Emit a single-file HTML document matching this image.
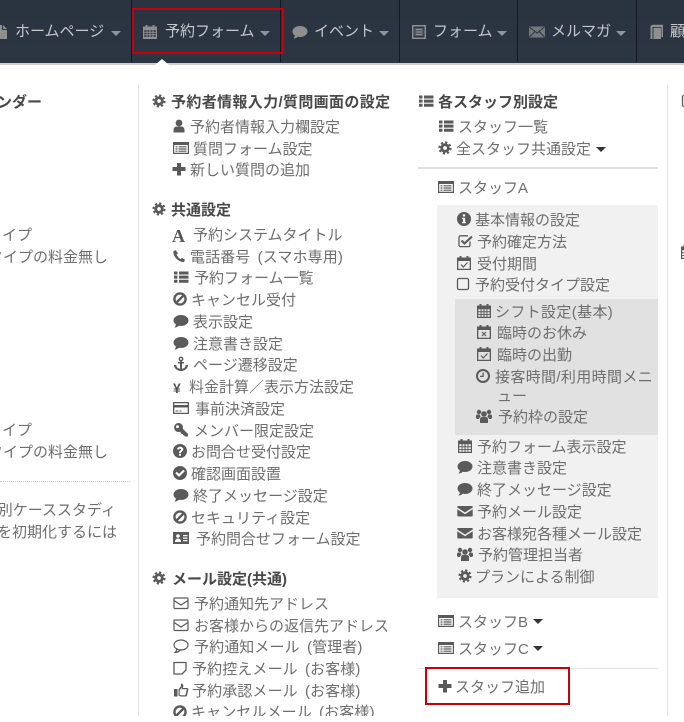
<!DOCTYPE html>
<html lang="ja"><head><meta charset="utf-8"><title>予約フォーム</title>
<style>
html,body{margin:0;padding:0;background:#fff}
#p{position:relative;width:684px;height:722px;overflow:hidden;background:#fff;font-family:"Liberation Sans","Noto Sans CJK JP",sans-serif;color:#6e6e6e;font-size:15px}
.l,.h,.n{position:absolute;white-space:nowrap;line-height:22px;height:22px;margin-top:2px}
.h{font-weight:bold;color:#484848}
.n{color:#c4c8cc;line-height:24px;height:24px;margin-top:1px}
.sp{word-spacing:3px;letter-spacing:.1px}
.ls{letter-spacing:.35px}
svg.i{position:absolute;width:16px;height:16px;color:#5a5a5a;fill:currentColor}
svg.w{color:#8f8f8f}
.b{position:absolute}
.c{position:absolute;width:0;height:0;border-left:5px solid transparent;border-right:5px solid transparent;border-top:5px solid #333}
.cn{border-top-color:#8e9499}
</style></head><body><div id="p">
<svg width="0" height="0" style="position:absolute"><defs>
<symbol id="cog" viewBox="-1.500 -1.500 19 19"><circle cx="8" cy="8" r="3.900" fill="none" stroke="currentColor" stroke-width="3.400"/><circle cx="8" cy="8" r="6.600" fill="none" stroke="currentColor" stroke-width="2.400" stroke-dasharray="2.600 2.580"/></symbol>
<symbol id="user" viewBox="0 0 16 16"><circle cx="8" cy="5" r="3.400"/><path d="M2.500 14.500V12c0-2.300 1.600-3.500 3-3.500h5c1.400 0 3 1.200 3 3.500v2.500z"/></symbol>
<symbol id="alt" viewBox="0 0 16 16"><path fill-rule="evenodd" d="M0 2h16v12H0zM1.200 5v7.800h13.600V5z"/><path d="M2.500 6.200h2v1.200h-2zM5.500 6.200h8v1.200h-8zM2.500 8.400h2v1.200h-2zM5.500 8.400h8v1.200h-8zM2.500 10.600h2v1.200h-2zM5.500 10.600h8v1.200h-8z"/></symbol>
<symbol id="plus" viewBox="0 0 16 16"><path d="M6 2h4v4h4.500v4H10v4.500H6V10H1.500V6H6z"/></symbol>
<symbol id="list" viewBox="0 0 16 16"><path d="M1 2.500h3.500v3H1zM6 2.500h9.500v3H6zM1 6.600h3.500v3H1zM6 6.600h9.500v3H6zM1 10.700h3.500v3H1zM6 10.700h9.500v3H6z"/></symbol>
<symbol id="phone" viewBox="0 0 16 16"><path d="M4.500 2 2.500 3.200C2 6 3.500 9 6 11.300c2 1.800 4.500 3 7 2.700l1-2.200-3-2-1.500 1.300C8 10.300 6.300 8.300 5.600 6.500L7 5.300z"/></symbol>
<symbol id="ban" viewBox="0 0 16 16"><circle cx="8" cy="8" r="5.600" fill="none" stroke="currentColor" stroke-width="2.400"/><path d="M4 12 12 4" stroke="currentColor" stroke-width="2.400"/></symbol>
<symbol id="com" viewBox="0 0 16 16"><ellipse cx="8" cy="7.500" rx="7.500" ry="5.500"/><path d="M3 10.500c0 2-.8 3-1.500 4 2 0 3.700-1 5-2.500z"/></symbol>
<symbol id="anc" viewBox="0 0 16 16"><circle cx="8" cy="3" r="1.700" fill="none" stroke="currentColor" stroke-width="1.400"/><path d="M7 5h2v8.500H7zM5 6h6v1.500H5z"/><path d="M1 9h3l-.8.800C4 12 5.500 12.800 8 13c2.500-.2 4-1 4.800-3.200L12 9h3c0 3-3 6-7 6s-7-3-7-6z"/></symbol>
<symbol id="card" viewBox="0 0 16 16"><path fill-rule="evenodd" d="M0 2h16v12H0zM1.300 7.500v5.200h13.400V7.500zM1.300 3.300v1.700h13.400V3.300z"/><path d="M2.500 10.500h3v1h-3zM6.500 10.500h2v1h-2z"/></symbol>
<symbol id="key" viewBox="0 0 16 16"><path fill-rule="evenodd" d="M5.500 1a4.500 4.500 0 0 1 4.300 5.700l5.200 5.300v2.500h-3l-1-1.200H10v-1.300H8.800L6.900 9.800A4.500 4.500 0 1 1 5.500 1zM4.500 3.200a1.500 1.500 0 1 0 0 3 1.500 1.500 0 0 0 0-3z"/></symbol>
<symbol id="q" viewBox="0 0 16 16"><path fill-rule="evenodd" d="M8 1a7 7 0 1 1 0 14A7 7 0 0 1 8 1zM7 10.800v2h2v-2zM5 6.200l1.600.5c.2-.7.700-1 1.400-1 .6 0 1.100.3 1.100.8 0 .9-2.100 1.200-2.100 3.500H9c0-1.500 2.300-1.700 2.300-3.700C11.300 4.700 9.800 3.700 8 3.700 6.500 3.700 5.400 4.700 5 6.200z"/></symbol>
<symbol id="ok" viewBox="0 0 16 16"><path fill-rule="evenodd" d="M8 1a7 7 0 1 1 0 14A7 7 0 0 1 8 1zM4.800 6.700 3.300 8.200 7 11.900l5.800-5.700-1.500-1.500L7 8.900z"/></symbol>
<symbol id="idc" viewBox="0 0 16 16"><path fill-rule="evenodd" d="M0 2h16v12H0zM5 4.200a1.800 1.800 0 1 0 0 3.600 1.800 1.800 0 0 0 0-3.600zM2 12h6c0-2-1-3.500-3-3.500S2 10 2 12zM10 5v1.200h4.500V5zM10 7.500v1.200h4.500V7.500zM10 10v1.200h4.500V10z"/></symbol>
<symbol id="envo" viewBox="0 0 16 16"><g fill="none" stroke="currentColor" stroke-width="1.200"><rect x="1" y="3" width="14" height="10.500" rx="1"/><path d="M1 5.500 8 10l7-4.500"/></g></symbol>
<symbol id="como" viewBox="0 0 16 16"><g fill="none" stroke="currentColor" stroke-width="1.200"><ellipse cx="8" cy="7" rx="7" ry="5"/><path d="M4 11c0 1.500-1 2.500-2 3.500 2 0 4-1 5-2.500"/></g></symbol>
<symbol id="stk" viewBox="0 0 16 16"><path d="M2 2.500h12v7.500l-4 4H2z" fill="none" stroke="currentColor" stroke-width="1.300"/></symbol>
<symbol id="thu" viewBox="0 0 16 16"><path fill-rule="evenodd" d="M1 7h3.500v7.500H1zM5.500 7.500 8 4V1.500c1.500 0 2.300 1 2.300 2.300S9.800 6 9.800 6H14c1 0 1.500.800 1.300 1.700L14 13.500c-.2.700-.7 1-1.300 1H7.500l-2-1zM6.700 8v4.700l1.200.6h4.500L13.800 7.300H8.500l.5-2z"/></symbol>
<symbol id="info" viewBox="0 0 16 16"><path fill-rule="evenodd" d="M8 1a7 7 0 1 1 0 14A7 7 0 0 1 8 1zM6.800 3.200v2.300h2.400V3.200zM6 6.700V8h1v3H6v1.300h4V11H9.200V6.700z"/></symbol>
<symbol id="chk" viewBox="0 0 16 16"><path d="M13 8.500V12c0 1-.6 1.600-1.500 1.600H3.700c-1 0-1.700-.6-1.700-1.600V4.500c0-1 .7-1.700 1.700-1.700H11" fill="none" stroke="currentColor" stroke-width="1.300"/><path d="M4.500 7.500 7.500 10.500 15 3.500" fill="none" stroke="currentColor" stroke-width="2.200"/></symbol>
<symbol id="cac" viewBox="0 0 16 16"><path fill-rule="evenodd" d="M1 2.500h2.500V1h2v1.500h5V1h2v1.500H15V15H1zM2.300 6v7.700h11.400V6z"/><path d="M5 9.500 7.300 12 11.500 7.500" fill="none" stroke="currentColor" stroke-width="1.200"/></symbol>
<symbol id="cax" viewBox="0 0 16 16"><path fill-rule="evenodd" d="M1 2.500h2.500V1h2v1.500h5V1h2v1.500H15V15H1zM2.300 6v7.700h11.400V6z"/><path d="M6 8 10 12M10 8 6 12" fill="none" stroke="currentColor" stroke-width="1.200"/></symbol>
<symbol id="sq" viewBox="0 0 16 16"><rect x="2.500" y="2.500" width="11" height="11" rx="1.500" fill="none" stroke="currentColor" stroke-width="1.300"/></symbol>
<symbol id="cal" viewBox="0 0 16 16"><path fill-rule="evenodd" d="M1 2.500h2.500V1h2v1.500h5V1h2v1.500H15V15H1zM2.200 6.300v2h2.400v-2zM5.500 6.300v2h2v-2zM8.500 6.300v2h2v-2zM11.400 6.300v2h2.400v-2zM2.200 9.200v1.800h2.400V9.200zM5.500 9.200v1.800h2V9.200zM8.500 9.200v1.800h2V9.200zM11.400 9.200v1.800h2.400V9.200zM2.200 11.900v1.900h2.400v-1.900zM5.500 11.900v1.900h2v-1.900zM8.500 11.900v1.900h2v-1.900zM11.400 11.900v1.900h2.400v-1.900z"/></symbol>
<symbol id="clk" viewBox="0 0 16 16"><circle cx="8" cy="8" r="6" fill="none" stroke="currentColor" stroke-width="2"/><path d="M7.500 4.500h1.300V9H5V7.800h2.500z"/></symbol>
<symbol id="usr" viewBox="0 0 16 16"><circle cx="8" cy="6" r="2.800"/><circle cx="3" cy="4" r="2.200"/><circle cx="13" cy="4" r="2.200"/><path d="M4 15v-3.500C4 9.800 5 9 6 9h4c1 0 2 .8 2 2.500V15z"/><path d="M0 10V8c0-1 .8-1.500 1.500-1.500h2.200C4 8 4.300 8.300 4.800 8.800 3.800 9.300 3.200 9.800 3 11H1zM16 10V8c0-1-.8-1.500-1.500-1.500h-2.200c-.3 1.500-.6 1.800-1.100 2.300 1 .5 1.600 1 1.800 2.200h2z"/></symbol>
<symbol id="env" viewBox="0 0 16 16"><path d="M1 3h14c.5 0 .7.300.7.800v.7L8 9.500.3 4.500v-.7C.3 3.300.5 3 1 3zM.3 6.200 8 11.200l7.700-5V12.500c0 .5-.4 1-1 1H1.300c-.6 0-1-.5-1-1z"/></symbol>
<symbol id="fil" viewBox="0 0 16 16"><path d="M2 1h7v5h5v9H2zM10 1l4 4h-4z"/></symbol>
<symbol id="bok" viewBox="0 0 16 16"><path d="M2.500 2 4.500.8H15V13h-1.500V3H4.500v12L2.500 15z"/><path d="M5.500 3.800h7.500V15H5.500z"/></symbol>
<symbol id="calf" viewBox="0 0 16 16"><path fill-rule="evenodd" d="M1 2.500h2.500V1h2v1.500h5V1h2v1.500H15V15H1zM2.200 6.300v1.500h2.400V6.300zM5.500 6.300v1.500h2V6.300zM8.500 6.300v1.500h2V6.300zM11.400 6.300v1.500h2.400V6.300zM2.200 8.800v1.500h2.400V8.800zM5.500 8.800v1.500h2V8.800zM8.500 8.800v1.500h2V8.800zM11.400 8.800v1.500h2.400V8.800zM2.200 11.300v1.500h2.400v-1.500zM5.500 11.300v1.500h2v-1.500zM8.500 11.300v1.500h2v-1.500zM11.400 11.300v1.500h2.400v-1.500z"/></symbol>
<symbol id="altn" viewBox="0 0 16 16"><path fill-rule="evenodd" d="M1 1h14v14H1zM2.500 2.500v11h11v-11z"/><path d="M3.500 4h9v8h-9z" opacity=".45"/><path d="M5 5h6v1H5zM5 7.500h6v1H5zM5 10h6v1H5z"/></symbol>
<symbol id="envn" viewBox="0 0 16 16"><path d="M0 2.500h16v11H0z" opacity=".75"/><path d="M.5 3 8 9l7.500-6M.5 13 6 7.500M15.500 13 10 7.500" fill="none" stroke="#2b3542" stroke-width="1.100"/></symbol>
</defs></svg>

<!-- nav -->
<div class="b" style="left:0;top:0;width:684px;height:63px;background:linear-gradient(#2a3340,#2c3643)"></div>
<div class="b" style="left:0;top:63px;width:684px;height:2px;background:#cfcfcf"></div>
<div class="b" style="left:131px;top:0;width:1px;height:62px;background:#151a20"></div>
<div class="b" style="left:280px;top:0;width:1px;height:62px;background:#151a20"></div>
<div class="b" style="left:399px;top:0;width:1px;height:62px;background:#151a20"></div>
<div class="b" style="left:517px;top:0;width:1px;height:62px;background:#151a20"></div>
<div class="b" style="left:636px;top:0;width:1px;height:62px;background:#151a20"></div>
<div class="b" style="left:155px;top:59px;width:0;height:0;border-left:7px solid transparent;border-right:7px solid transparent;border-bottom:6px solid #fff"></div>
<svg class="i w" style="left:-7px;top:24px"><use href="#fil"/></svg>
<span class="n" style="left:15px;top:19px">ホームページ</span><i class="c cn" style="left:111px;top:31px"></i>
<svg class="i w" style="left:142px;top:24px"><use href="#calf"/></svg>
<span class="n" style="left:165px;top:19px">予約フォーム</span><i class="c cn" style="left:260px;top:31px"></i>
<svg class="i w" style="left:292px;top:24px"><use href="#com"/></svg>
<span class="n" style="left:314px;top:19px">イベント</span><i class="c cn" style="left:379px;top:31px"></i>
<svg class="i w" style="left:411px;top:24px"><use href="#altn"/></svg>
<span class="n" style="left:433px;top:19px">フォーム</span><i class="c cn" style="left:497px;top:31px"></i>
<svg class="i w" style="left:529px;top:24px"><use href="#envn"/></svg>
<span class="n" style="left:551px;top:19px">メルマガ</span><i class="c cn" style="left:616px;top:31px"></i>
<svg class="i w" style="left:648px;top:24px"><use href="#bok"/></svg>
<span class="n" style="left:670px;top:19px">顧客</span>
<div class="b" style="left:132px;top:8px;width:148px;height:42px;border:2px solid #c8000a"></div>

<!-- column rules -->
<div class="b" style="left:138px;top:85px;width:1px;height:637px;background:#e4e4e4"></div>
<div class="b" style="left:667px;top:85px;width:1px;height:637px;background:#e4e4e4"></div>

<!-- column 1 -->
<span class="h" style="right:642px;top:90px">カレンダー</span>
<span class="l" style="right:652px;top:223px">タイプ</span>
<span class="l" style="right:576px;top:245px">タイプの料金無し</span>
<span class="l" style="right:652px;top:418px">タイプ</span>
<span class="l" style="right:576px;top:440px">タイプの料金無し</span>
<div class="b" style="left:0;top:481px;width:130px;border-top:1px dotted #ccc"></div>
<span class="l" style="right:568px;top:498px">別ケーススタディ</span>
<span class="l" style="right:567px;top:520px">を初期化するには</span>

<!-- column 2 -->
<svg class="i" style="left:151px;top:93px"><use href="#cog"/></svg><span class="h ls" style="left:171px;top:90px">予約者情報入力/質問画面の設定</span>
<svg class="i" style="left:171px;top:118px"><use href="#user"/></svg><span class="l" style="left:190px;top:115px">予約者情報入力欄設定</span>
<svg class="i" style="left:173px;top:140px"><use href="#alt"/></svg><span class="l" style="left:193px;top:137px">質問フォーム設定</span>
<svg class="i" style="left:171px;top:161px"><use href="#plus"/></svg><span class="l" style="left:190px;top:158px">新しい質問の追加</span>

<svg class="i" style="left:151px;top:201px"><use href="#cog"/></svg><span class="h" style="left:171px;top:198px">共通設定</span>
<span class="l" style="left:172px;top:223px;font:bold 18px/22px 'Liberation Serif',serif;color:#555">A</span><span class="l" style="left:193px;top:223px">予約システムタイトル</span>
<svg class="i" style="left:171px;top:248px"><use href="#phone"/></svg><span class="l sp" style="left:190px;top:245px">電話番号 (スマホ専用)</span>
<svg class="i" style="left:173px;top:269px"><use href="#list"/></svg><span class="l" style="left:194px;top:266px">予約フォーム一覧</span>
<svg class="i" style="left:172px;top:291px"><use href="#ban"/></svg><span class="l" style="left:191px;top:288px">キャンセル受付</span>
<svg class="i" style="left:173px;top:313px"><use href="#com"/></svg><span class="l" style="left:193px;top:310px">表示設定</span>
<svg class="i" style="left:173px;top:335px"><use href="#com"/></svg><span class="l" style="left:193px;top:332px">注意書き設定</span>
<svg class="i" style="left:173px;top:356px"><use href="#anc"/></svg><span class="l" style="left:193px;top:353px">ページ遷移設定</span>
<span class="l" style="left:173px;top:375px;font-weight:bold;color:#555;font-size:14px">¥</span><span class="l" style="left:189px;top:375px">料金計算／表示方法設定</span>
<svg class="i" style="left:173px;top:400px"><use href="#card"/></svg><span class="l" style="left:195px;top:397px">事前決済設定</span>
<svg class="i" style="left:173px;top:422px"><use href="#key"/></svg><span class="l" style="left:194px;top:419px">メンバー限定設定</span>
<svg class="i" style="left:172px;top:443px"><use href="#q"/></svg><span class="l" style="left:191px;top:440px">お問合せ受付設定</span>
<svg class="i" style="left:172px;top:465px"><use href="#ok"/></svg><span class="l" style="left:191px;top:462px">確認画面設置</span>
<svg class="i" style="left:173px;top:487px"><use href="#com"/></svg><span class="l" style="left:193px;top:484px">終了メッセージ設定</span>
<svg class="i" style="left:172px;top:509px"><use href="#ban"/></svg><span class="l" style="left:191px;top:506px">セキュリティ設定</span>
<svg class="i" style="left:173px;top:530px"><use href="#idc"/></svg><span class="l" style="left:196px;top:527px">予約問合せフォーム設定</span>

<svg class="i" style="left:151px;top:570px"><use href="#cog"/></svg><span class="h" style="left:172px;top:567px">メール設定(共通)</span>
<svg class="i" style="left:173px;top:595px"><use href="#envo"/></svg><span class="l" style="left:194px;top:592px">予約通知先アドレス</span>
<svg class="i" style="left:173px;top:617px"><use href="#envo"/></svg><span class="l" style="left:194px;top:614px">お客様からの返信先アドレス</span>
<svg class="i" style="left:173px;top:638px"><use href="#como"/></svg><span class="l sp" style="left:194px;top:635px">予約通知メール (管理者)</span>
<svg class="i" style="left:172px;top:660px"><use href="#stk"/></svg><span class="l sp" style="left:192px;top:657px">予約控えメール (お客様)</span>
<svg class="i" style="left:173px;top:682px"><use href="#thu"/></svg><span class="l sp" style="left:192px;top:679px">予約承認メール (お客様)</span>
<svg class="i" style="left:172px;top:704px"><use href="#ban"/></svg><span class="l sp" style="left:191px;top:700px">キャンセルメール (お客様)</span>

<!-- column 3 -->
<svg class="i" style="left:418px;top:93px"><use href="#list"/></svg><span class="h" style="left:438px;top:90px">各スタッフ別設定</span>
<svg class="i" style="left:438px;top:118px"><use href="#list"/></svg><span class="l" style="left:458px;top:115px">スタッフ一覧</span>
<svg class="i" style="left:437px;top:140px"><use href="#cog"/></svg><span class="l" style="left:456px;top:137px">全スタッフ共通設定</span><i class="c" style="left:596px;top:147px"></i>
<div class="b" style="left:418px;top:167px;width:240px;height:2px;background:#e0e0e0"></div>
<svg class="i" style="left:438px;top:179px"><use href="#alt"/></svg><span class="l" style="left:458px;top:176px">スタッフA</span>

<div class="b" style="left:437px;top:205px;width:221px;height:393px;background:#f1f1f1"></div>
<div class="b" style="left:455px;top:299px;width:203px;height:136px;background:#e1e1e1"></div>

<svg class="i" style="left:456px;top:211px"><use href="#info"/></svg><span class="l" style="left:475px;top:208px">基本情報の設定</span>
<svg class="i" style="left:457px;top:233px"><use href="#chk"/></svg><span class="l" style="left:477px;top:230px">予約確定方法</span>
<svg class="i" style="left:456px;top:255px"><use href="#cac"/></svg><span class="l" style="left:477px;top:252px">受付期間</span>
<svg class="i" style="left:455px;top:276px"><use href="#sq"/></svg><span class="l" style="left:475px;top:273px">予約受付タイプ設定</span>

<svg class="i" style="left:476px;top:303px"><use href="#cal"/></svg><span class="l ls" style="left:495px;top:300px">シフト設定(基本)</span>
<svg class="i" style="left:476px;top:324px"><use href="#cax"/></svg><span class="l" style="left:497px;top:321px">臨時のお休み</span>
<svg class="i" style="left:476px;top:346px"><use href="#cac"/></svg><span class="l" style="left:497px;top:343px">臨時の出勤</span>
<svg class="i" style="left:475px;top:368px"><use href="#clk"/></svg><span class="l ls" style="left:495px;top:365px">接客時間/利用時間メニ</span>
<span class="l" style="left:497px;top:384px">ュー</span>
<svg class="i" style="left:476px;top:408px"><use href="#usr"/></svg><span class="l" style="left:498px;top:405px">予約枠の設定</span>

<svg class="i" style="left:457px;top:438px"><use href="#cal"/></svg><span class="l" style="left:477px;top:435px">予約フォーム表示設定</span>
<svg class="i" style="left:457px;top:459px"><use href="#com"/></svg><span class="l" style="left:477px;top:456px">注意書き設定</span>
<svg class="i" style="left:457px;top:481px"><use href="#com"/></svg><span class="l" style="left:477px;top:478px">終了メッセージ設定</span>
<svg class="i" style="left:457px;top:503px"><use href="#env"/></svg><span class="l" style="left:477px;top:500px">予約メール設定</span>
<svg class="i" style="left:457px;top:525px"><use href="#env"/></svg><span class="l" style="left:477px;top:522px">お客様宛各種メール設定</span>
<svg class="i" style="left:457px;top:546px"><use href="#usr"/></svg><span class="l" style="left:478px;top:543px">予約管理担当者</span>
<svg class="i" style="left:457px;top:568px"><use href="#cog"/></svg><span class="l" style="left:475px;top:565px">プランによる制御</span>

<svg class="i" style="left:438px;top:613px"><use href="#alt"/></svg><span class="l" style="left:458px;top:610px">スタッフB</span><i class="c" style="left:533px;top:619px"></i>
<svg class="i" style="left:438px;top:640px"><use href="#alt"/></svg><span class="l" style="left:458px;top:637px">スタッフC</span><i class="c" style="left:533px;top:646px"></i>
<div class="b" style="left:418px;top:668px;width:240px;height:1px;background:#e4e4e4"></div>
<svg class="i" style="left:437px;top:678px"><use href="#plus"/></svg><span class="l" style="left:455px;top:675px">スタッフ追加</span>
<div class="b" style="left:425px;top:667px;width:141px;height:34px;border:2px solid #c8000a"></div>

<!-- column 4 clipped -->
<svg class="i" style="left:680px;top:93px"><use href="#sq"/></svg>
<svg class="i" style="left:680px;top:244px"><use href="#cal"/></svg>

<!-- bottom cutoff -->
<div class="b" style="left:0;top:716px;width:684px;height:6px;background:#fff"></div>
</div></body></html>
